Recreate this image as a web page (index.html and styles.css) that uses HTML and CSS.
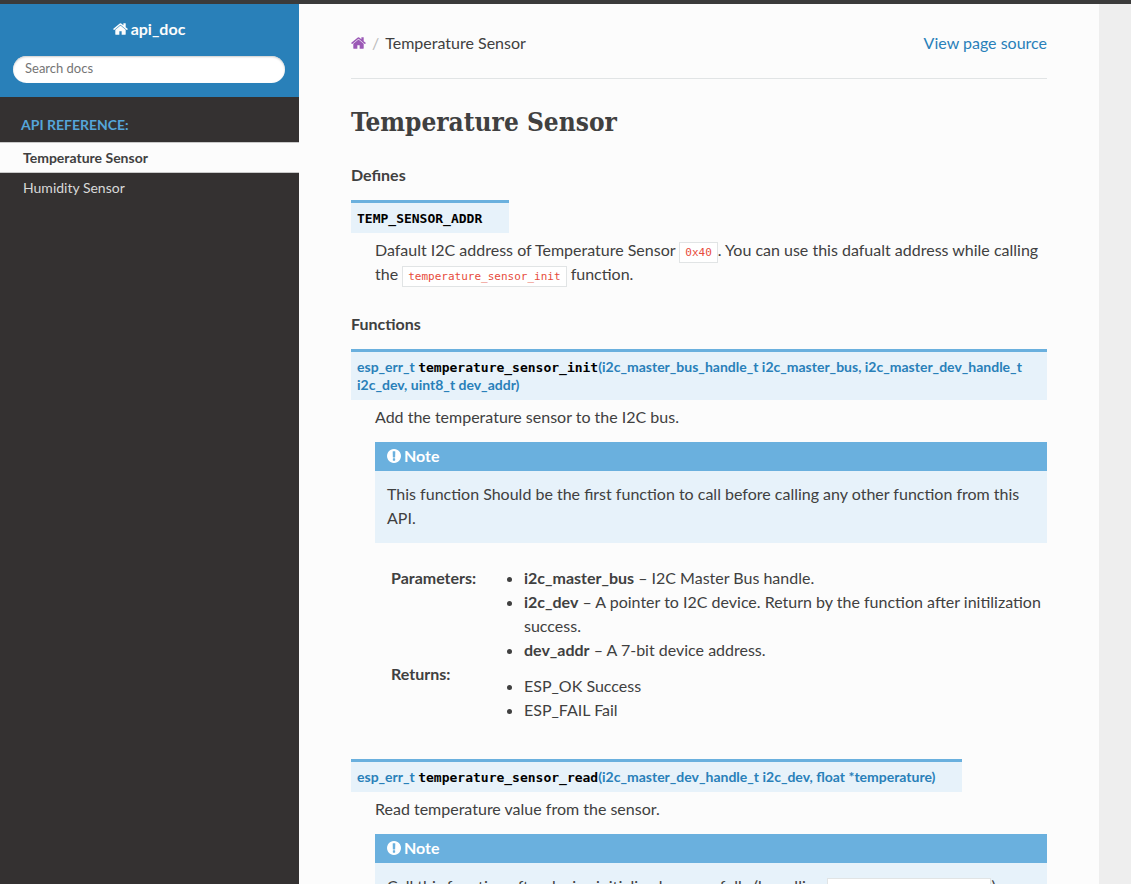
FILE: index.html
```html
<!DOCTYPE html>
<html lang="en">
<head>
<meta charset="utf-8">
<meta name="viewport" content="width=device-width, initial-scale=1">
<title>Temperature Sensor — api_doc</title>
<link rel="stylesheet" href="styles.css">
</head>
<body>
<svg class="sprite" aria-hidden="true">
  <symbol id="home" viewBox="0 253 1664 1283"><path d="M1408 992v480q0 26-19 45t-45 19H960v-384H704v384H320q-26 0-45-19t-19-45V992q0-1 .5-3t.5-3l575-474 575 474q1 2 1 6zm223-69l-62 74q-8 9-21 11h-3q-13 0-21-7L832 424l-692 577q-12 8-24 7-13-2-21-11l-62-74q-8-10-7-23.5T37 878l719-599q32-26 76-26t76 26l244 204V288q0-14 9-23t23-9h192q14 0 23 9t9 23v408l219 182q10 8 11 21.5t-7 23.5z"/></symbol>
  <symbol id="exclamation" viewBox="128 128 1536 1536"><path d="M896 128q209 0 385.5 103T1561 510.5 1664 896t-103 385.5-279.5 279.5T896 1664t-385.5-103T231 1281.5 128 896t103-385.5T510.5 231 896 128zm128 1247v-190q0-14-9-23.5t-22-9.5H801q-13 0-23 10t-10 23v190q0 13 10 23t23 10h192q13 0 22-9.5t9-23.5zm-2-344l18-621q0-12-10-18-10-8-24-8H786q-14 0-24 8-10 6-10 18l17 621q0 10 10 17.5t24 7.5h185q14 0 23.5-7.5t10.5-17.5z"/></symbol>
</svg>
<div class="shell">
  <nav class="sidebar" aria-label="Main">
    <div class="side-head">
      <a class="brand" href="#"><svg class="icon-home" aria-hidden="true"><use href="#home"/></svg>api_doc</a>
      <form role="search"><input class="search" type="text" placeholder="Search docs" aria-label="Search docs"></form>
    </div>
    <p class="caption">API Reference:</p>
    <ul class="menu">
      <li><a class="current" href="#" aria-current="page">Temperature Sensor</a></li>
      <li><a href="#">Humidity Sensor</a></li>
    </ul>
  </nav>
  <div class="scroller">
    <main class="content">
      <div class="crumbs">
        <a class="crumb-home" href="#" aria-label="Home"><svg class="icon-home" aria-hidden="true"><use href="#home"/></svg></a>
        <span class="slash">/</span>
        <span>Temperature Sensor</span>
        <a class="source" href="#">View page source</a>
      </div>
      <hr>
      <h1>Temperature Sensor</h1>
      <p class="rubric">Defines</p>
      <dl class="api">
        <dt class="sig"><span class="name">TEMP_SENSOR_ADDR</span></dt>
        <dd>
          <p>Dafault I2C address of Temperature Sensor <code>0x40</code>. You can use this dafualt address while calling the <code>temperature_sensor_init</code> function.</p>
        </dd>
      </dl>
      <p class="rubric">Functions</p>
      <dl class="api">
        <dt class="sig">esp_err_t <span class="name">temperature_sensor_init</span>(i2c_master_bus_handle_t i2c_master_bus, i2c_master_dev_handle_t i2c_dev, uint8_t dev_addr)</dt>
        <dd>
          <p>Add the temperature sensor to the I2C bus.</p>
          <div class="note">
            <p class="note-title"><svg class="icon-note" aria-hidden="true"><use href="#exclamation"/></svg>Note</p>
            <p>This function Should be the first function to call before calling any other function from this API.</p>
          </div>
          <dl class="fields">
            <dt>Parameters:</dt>
            <dd>
              <ul>
                <li><strong>i2c_master_bus</strong> – I2C Master Bus handle.</li>
                <li><strong>i2c_dev</strong> – A pointer to I2C device. Return by the function after initilization success.</li>
                <li><strong>dev_addr</strong> – A 7-bit device address.</li>
              </ul>
            </dd>
            <dt>Returns:</dt>
            <dd>
              <ul class="returns">
                <li>ESP_OK Success</li>
                <li>ESP_FAIL Fail</li>
              </ul>
            </dd>
          </dl>
        </dd>
      </dl>
      <dl class="api">
        <dt class="sig">esp_err_t <span class="name">temperature_sensor_read</span>(i2c_master_dev_handle_t i2c_dev, float *temperature)</dt>
        <dd>
          <p>Read temperature value from the sensor.</p>
          <div class="note">
            <p class="note-title"><svg class="icon-note" aria-hidden="true"><use href="#exclamation"/></svg>Note</p>
            <p>Call this function after device initialized successfully (by calling <code>temperature_sensor_init</code>)</p>
          </div>
        </dd>
      </dl>
    </main>
  </div>
</div>
</body>
</html>
```
FILE: styles.css
```css
* { box-sizing: border-box; }

body {
  margin: 0;
  font: 16px/24px Lato, "Open Sans", sans-serif;
  color: #404040;
  background: #eee;
}

p, ul, dl, dd, h1 { margin: 0; padding: 0; }
a { color: #2980b9; text-decoration: none; }

.sprite { display: none; }
.icon-home { width: 15px; height: 12px; fill: currentColor; }
.icon-note { width: 14px; height: 14px; fill: currentColor; }

.shell {
  display: flex;
  height: 100vh;
  border-top: 4px solid #3b3b3b;
}

/* Sidebar */
.sidebar {
  flex: 0 0 299px;
  background: #343131;
  font-size: 14px;
}
.side-head {
  padding: 13px 14px 14px 13px;
  background: #2980b9;
}
.brand {
  display: flex;
  align-items: center;
  justify-content: center;
  gap: 3px;
  margin-bottom: 15px;
  color: #fcfcfc;
  font-size: 16px;
  font-weight: 700;
}
.search {
  display: block;
  width: 100%;
  height: 27px;
  padding: 0 12px 3px;
  border: 0;
  border-radius: 14px;
  background: #fff;
  box-shadow: inset 0 1px 2px #ccc;
  font: 13px Lato, "Open Sans", sans-serif;
}
.search::placeholder { color: #757575; opacity: 1; }
.caption {
  padding: 12px 21px 1px;
  line-height: 32px;
  color: #55a5d9;
  font-weight: 700;
  text-transform: uppercase;
}
.menu { list-style: none; }
.menu a {
  display: block;
  padding: 5px 23px;
  line-height: 19px;
  color: #d9d9d9;
}
.menu .current {
  border: solid #c9c9c9;
  border-width: 1px 0;
  background: #fcfcfc;
  color: #404040;
  font-weight: 700;
}

/* Document */
.scroller {
  flex: 1;
  min-width: 0;
  overflow-y: auto;
  scrollbar-width: none;
}
.content {
  max-width: 800px;
  min-height: 100%;
  padding: 27px 52px;
  background: #fcfcfc;
}
.crumbs { display: flex; align-items: center; }
.crumb-home { display: flex; color: #9b59b6; }
.slash { padding: 0 6px; color: #bbb; }
.source { margin-left: auto; }
hr {
  margin: 23px 0 25px;
  border: 0;
  border-top: 1px solid #e1e4e5;
}
h1 {
  margin-bottom: 23px;
  font: 700 26px/36px "DejaVu Serif Condensed", "DejaVu Serif", serif;
}
.rubric { margin-bottom: 13px; font-weight: 700; }
.api { margin-bottom: 24px; }
.api > dd { margin-left: 24px; }
.api > dd > p { margin-bottom: 13px; }
.api > dd > p:only-child { margin-bottom: 26px; }

.sig {
  display: table;
  margin-bottom: 5px;
  padding: 6px;
  border-top: 3px solid #6ab0de;
  background: #e7f2fa;
  color: #2980b9;
  font-size: 14px;
  line-height: 18px;
  font-weight: 700;
}
.sig::after {
  content: "";
  display: inline-block;
  width: 21px;
}
.name {
  color: #000;
  font-family: "DejaVu Sans Mono", monospace;
  font-size: 13px;
  line-height: 1;
}
code {
  padding: 3px 5px;
  border: 1px solid #e1e4e5;
  background: #fff;
  color: #e74c3c;
  font: 11px "DejaVu Sans Mono", monospace;
}

.note {
  margin-bottom: 23px;
  padding: 0 12px 13px;
  background: #e7f2fa;
}
.note-title {
  display: flex;
  align-items: center;
  gap: 3px;
  margin: 0 -12px 11px;
  padding: 5px 12px 7px;
  background: #6ab0de;
  color: #fff;
  line-height: 17px;
  font-weight: 700;
}

.fields {
  display: grid;
  grid-template-columns: 109px 1fr;
  padding-left: 16px;
  margin-bottom: 37px;
}
.fields dt { font-weight: 700; }
.fields ul { padding-left: 24px; }
.fields .returns { padding-top: 12px; }
```
